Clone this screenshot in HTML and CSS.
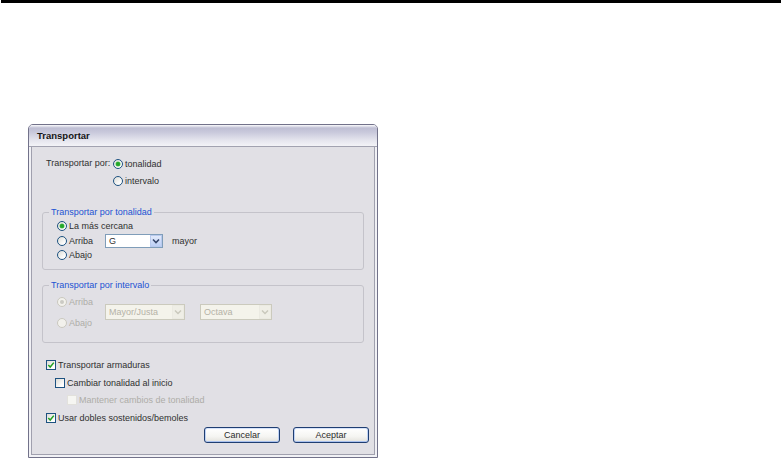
FILE: index.html
```html
<!DOCTYPE html>
<html>
<head>
<meta charset="utf-8">
<link rel="stylesheet" href="styles.css">
</head>
<body>
<div class="topline"></div>
<div class="dialog">
  <div class="titlebar">Transportar</div>
  <div class="body">
    <div class="por">
      <span class="porlabel">Transportar por:</span>
      <div class="porcol">
        <div class="rrow"><span class="radio on"></span><span>tonalidad</span></div>
        <div class="rrow"><span class="radio"></span><span>intervalo</span></div>
      </div>
    </div>

    <fieldset class="group g1">
      <legend>Transportar por tonalidad</legend>
      <div class="gcontent">
        <div class="grow h15"><span class="radio on"></span><span>La más cercana</span></div>
        <div class="grow h15">
          <span class="rlabel"><span class="radio"></span><span>Arriba</span></span>
          <div class="combo w58"><span class="ctext">G</span><span class="cbtn"><svg width="8" height="6" viewBox="0 0 8 6"><path d="M1 1.5 L4 4.5 L7 1.5" fill="none" stroke="#35466a" stroke-width="1.6"/></svg></span></div>
          <span class="mayor">mayor</span>
        </div>
        <div class="grow h14"><span class="radio"></span><span>Abajo</span></div>
      </div>
    </fieldset>

    <fieldset class="group g2">
      <legend>Transportar por intervalo</legend>
      <div class="g2content">
        <div class="g2col">
          <div class="grow h14 dis"><span class="radio dis on"></span><span>Arriba</span></div>
          <div class="grow h14 dis"><span class="radio dis"></span><span>Abajo</span></div>
        </div>
        <div class="combo dis w80"><span class="ctext">Mayor/Justa</span><span class="cbtn"><svg width="8" height="6" viewBox="0 0 8 6"><path d="M1 1.5 L4 4.5 L7 1.5" fill="none" stroke="#c9c8bc" stroke-width="1.4"/></svg></span></div>
        <div class="combo dis w72"><span class="ctext">Octava</span><span class="cbtn"><svg width="8" height="6" viewBox="0 0 8 6"><path d="M1 1.5 L4 4.5 L7 1.5" fill="none" stroke="#c9c8bc" stroke-width="1.4"/></svg></span></div>
      </div>
    </fieldset>

    <div class="checks">
      <div class="crow"><span class="check on"><svg width="8" height="8" viewBox="0 0 8 8"><path d="M1.3 4 L3.2 6 L6.8 1.6" fill="none" stroke="#21a121" stroke-width="1.5"/></svg></span><span>Transportar armaduras</span></div>
      <div class="crow i1"><span class="check"></span><span>Cambiar tonalidad al inicio</span></div>
      <div class="crow i2 dis"><span class="check dis"></span><span>Mantener cambios de tonalidad</span></div>
      <div class="crow"><span class="check on"><svg width="8" height="8" viewBox="0 0 8 8"><path d="M1.3 4 L3.2 6 L6.8 1.6" fill="none" stroke="#21a121" stroke-width="1.5"/></svg></span><span>Usar dobles sostenidos/bemoles</span></div>
    </div>

    <div class="buttons">
      <div class="btn">Cancelar</div>
      <div class="btn">Aceptar</div>
    </div>
  </div>
</div>
</body>
</html>
```

FILE: styles.css
```css
html, body {
  margin: 0;
  background: #ffffff;
}
body {
  font-family: "Liberation Sans", Arial, sans-serif;
  font-size: 9px;
  color: #303030;
}
.topline {
  height: 3px;
  width: 780px;
  margin-left: 1px;
  background: #000;
}
.dialog {
  margin: 121px 0 0 28px;
  width: 350px;
  height: 334px;
  box-sizing: border-box;
  border: 1px solid #72728a;
  border-radius: 5px 5px 0 0;
  background: #f1f1f5;
  display: flex;
  flex-direction: column;
  overflow: hidden;
}
.titlebar {
  height: 20px;
  padding: 1px 0 0 8px;
  border-bottom: 1px solid #a2a2b0;
  background: linear-gradient(#fbfbfd 0, #bfbfd4 3px, #c8c8db 7px, #e4e4ed 15px, #f3f3f7 21px);
  font-weight: bold;
  font-size: 9.5px;
  line-height: 20px;
  color: #151515;
}
.body {
  flex: 1;
  margin: 0 2px 2px;
  border: 1px solid #a0a0ae;
  border-top: none;
  background: #e1e0e5;
  padding: 8px 10px 0;
}
.por {
  display: flex;
  margin-left: 4px;
}
.porlabel {
  width: 67px;
  flex-shrink: 0;
  line-height: 17px;
}
.rrow, .grow {
  display: flex;
  align-items: center;
  height: 17px;
  white-space: nowrap;
}
.grow.h15 { height: 15px; }
.grow.h14 { height: 14px; }
.radio {
  width: 10px;
  height: 10px;
  box-sizing: border-box;
  border-radius: 50%;
  border: 1px solid #1d5281;
  background: linear-gradient(135deg, #dcdcd6, #ffffff 80%);
  margin-right: 2px;
  flex-shrink: 0;
  display: flex;
  align-items: center;
  justify-content: center;
}
.radio.on::after {
  content: "";
  width: 4px;
  height: 4px;
  border-radius: 50%;
  background: #25a52a;
  box-shadow: 0 0 0 0.5px #58c85a;
}
.radio.dis {
  border-color: #cac8bf;
  background: #f2f1ec;
}
.radio.dis.on::after {
  background: #cbcac4;
  box-shadow: none;
}
.dis {
  color: #aeada8;
}
.group {
  margin: 0;
  padding: 0 6px;
  border: 1px solid #c4c3ca;
  border-radius: 3px;
  min-width: 0;
}
.group legend {
  padding: 0 2px;
  line-height: 12px;
  color: #2253d3;
}
.g1 {
  margin-top: 17px;
  padding-bottom: 7px;
}
.g2 {
  margin-top: 9px;
  padding-bottom: 12px;
}
.gcontent {
  padding-left: 8px;
}
.rlabel {
  width: 48px;
  display: flex;
  align-items: center;
  flex-shrink: 0;
}
.combo {
  display: flex;
  height: 14px;
  box-sizing: border-box;
  border: 1px solid #7f9db9;
  background: #ffffff;
}
.combo.w58 { width: 58px; }
.combo.w80 { width: 80px; height: 16px; }
.combo.w72 { width: 72px; height: 16px; margin-left: 15px; }
.ctext {
  flex: 1;
  padding-left: 3px;
  display: flex;
  align-items: center;
}
.cbtn {
  width: 12px;
  box-sizing: border-box;
  border: 1px solid #b9caee;
  background: linear-gradient(#e2eafb, #bccff5);
  display: flex;
  align-items: center;
  justify-content: center;
}
.combo.dis {
  border-color: #cbcabd;
  background: #f4f3eb;
  color: #b4b2a7;
  margin-top: 13px;
}
.combo.dis .cbtn {
  border-color: #ebeae2;
  background: #efeee6;
}
.mayor {
  margin-left: 9px;
}
.g2content {
  display: flex;
  padding-left: 8px;
}
.g2col {
  width: 48px;
  padding-top: 4px;
  display: flex;
  flex-direction: column;
  gap: 7px;
}
.checks {
  margin-top: 13.5px;
}
.crow {
  display: flex;
  align-items: center;
  height: 17.5px;
  margin-left: 4px;
  white-space: nowrap;
}
.crow.i1 { margin-left: 13px; }
.crow.i2 { margin-left: 25px; }
.check {
  width: 10px;
  height: 10px;
  box-sizing: border-box;
  border: 1px solid #1d5281;
  background: linear-gradient(135deg, #dcdcd6, #ffffff 80%);
  margin-right: 2px;
  display: flex;
  align-items: center;
  justify-content: center;
  flex-shrink: 0;
}
.check.dis {
  border-color: #e2e1dc;
  background: #f6f6f2;
}
.buttons {
  display: flex;
  justify-content: flex-end;
  gap: 13px;
  margin: 0.5px -5px 0 0;
}
.btn {
  width: 76px;
  height: 16px;
  box-sizing: border-box;
  border: 1px solid #1f3e72;
  border-radius: 3px;
  background: linear-gradient(#ffffff, #f5f5f2 60%, #e3e2dc);
  box-shadow: inset 1px 0 #bfd2f5, inset -1px 0 #bfd2f5, inset 0 -1px #a9c1ee, inset 0 1px #d6e3fa;
  display: flex;
  align-items: center;
  justify-content: center;
  color: #2a2a2a;
}
```
